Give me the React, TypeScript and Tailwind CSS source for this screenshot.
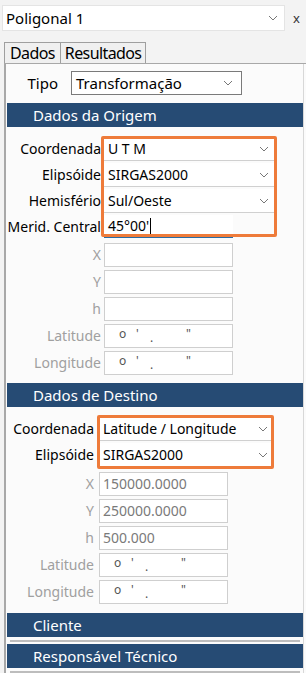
import React from 'react'

const Chevron = () => (
  <svg width="10" height="6" viewBox="0 0 10 6" className="shrink-0">
    <polyline points="1,1 5,5 9,1" fill="none" stroke="#777" strokeWidth="1" />
  </svg>
)

function Select({ value, w, className = '' }: { value: string; w: string; className?: string }) {
  return (
    <div className={`${w} h-[24px] bg-white flex items-center justify-between pl-[4px] pr-[6px] ${className}`}>
      <span className="text-black">{value}</span>
      <Chevron />
    </div>
  )
}

function Field({ value = '', dms = false }: { value?: string; dms?: boolean }) {
  return (
    <div className="w-[129px] h-[24px] bg-white border border-[#cfcfcf] flex items-center pl-[3px] text-[#7a7a7a]">
      {dms ? (
        <span className="relative w-full h-full text-[12px] text-[#555]">
          <span className="absolute left-[11px] top-[3px]">o</span>
          <span className="absolute left-[28px] top-[3px]">'</span>
          <span className="absolute left-[42px] top-[7px]">.</span>
          <span className="absolute left-[78px] top-[3px]">"</span>
        </span>
      ) : (
        value
      )}
    </div>
  )
}

function SectionBar({ title }: { title: string }) {
  return (
    <div className="h-[24px] bg-[#264b74] text-white flex items-center pl-[26px] text-[15px]">{title}</div>
  )
}

export default function App() {
  const origemFields = ['X', 'Y', 'h', 'Latitude', 'Longitude']
  const destino = [
    { l: 'X', v: '150000.0000' },
    { l: 'Y', v: '250000.0000' },
    { l: 'h', v: '500.000' },
    { l: 'Latitude', dms: true },
    { l: 'Longitude', dms: true },
  ]

  return (
    <div className="w-[306px] h-[673px] overflow-hidden bg-[#f3f3f3] text-[14px] leading-none" style={{ fontFamily: '"Noto Sans", sans-serif' }}>
      {/* top selector */}
      <div className="flex items-center pt-[5px] pl-[2px]">
        <div className="w-[283px] h-[26px] bg-white border border-[#e4e4e4] flex items-center justify-between pl-[3px] pr-[6px] text-[15px]">
          <span>Poligonal 1</span>
          <Chevron />
        </div>
        <span className="ml-[8px] text-[13px] text-[#333]">x</span>
      </div>

      {/* tabs */}
      <div className="flex pl-[4px] mt-[11px] text-[16px] tracking-[-0.6px]">
        <div className="h-[21px] px-[5px] border border-b-0 border-[#9f9f9f] bg-[#f0f0f0] flex items-center">Dados</div>
        <div className="h-[21px] px-[4px] border border-l-0 border-b-0 border-[#9f9f9f] bg-[#f0f0f0] flex items-center">Resultados</div>
      </div>

      {/* panel */}
      <div className="ml-[4px] border-l-2 border-t border-[#a8a8a8] bg-[#fbfbfb] h-[700px] pl-[1px] pr-[2px]">
        <div className="border-r border-[#d8d8d8] h-full">
          <div className="flex items-center pt-[7px] h-[31px]">
            <span className="w-[51px] text-right text-[15px]">Tipo</span>
            <div className="ml-[13px] w-[171px] h-[24px] bg-white border border-[#7a7a7a] flex items-center justify-between pl-[4px] pr-[8px] text-[15px]">
              <span>Transformação</span>
              <Chevron />
            </div>
          </div>

          <div className="mt-[8px]">
            <SectionBar title="Dados da Origem" />
          </div>

          {/* origem */}
          <div className="relative pt-[10px]">
            <div className="flex flex-col gap-[2px]">
              {[
                ['Coordenada', 'U T M'],
                ['Elipsóide', 'SIRGAS2000'],
                ['Hemisfério', 'Sul/Oeste'],
              ].map(([l, v]) => (
                <div key={l} className="flex items-center h-[24px]">
                  <span className="w-[94px] text-right">{l}</span>
                  <Select value={v} w="w-[171px]" className="ml-[3px] border-b border-[#d0d0d0]" />
                </div>
              ))}
              <div className="flex items-start h-[24px]">
                <span className="w-[94px] text-right self-center">Merid. Central</span>
                <div className="ml-[3px] w-[129px] h-[23px] bg-white flex items-center pl-[4px] border-b-2 border-[#2a6ca4]">
                  45°00'<span className="w-[1px] h-[16px] bg-black ml-[1px]" />
                </div>
              </div>
            </div>
            <div className="absolute left-[94px] top-[9px] w-[176px] h-[101px] border-[3px] border-[#ee7b3a] rounded-[2px] pointer-events-none" />

            <div className="flex flex-col gap-[3px] mt-[4px]">
              {origemFields.map((l) => (
                <div key={l} className="flex items-center h-[24px]">
                  <span className="w-[94px] text-right text-[#a0a0a0]">{l}</span>
                  <div className="ml-[3px]">
                    <Field dms={l === 'Latitude' || l === 'Longitude'} />
                  </div>
                </div>
              ))}
            </div>
          </div>

          <div className="mt-[8px]">
            <SectionBar title="Dados de Destino" />
          </div>

          {/* destino */}
          <div className="relative pt-[10px]">
            <div className="flex flex-col gap-[2px]">
              {[
                ['Coordenada', 'Latitude / Longitude'],
                ['Elipsóide', 'SIRGAS2000'],
              ].map(([l, v]) => (
                <div key={l} className="flex items-center h-[24px]">
                  <span className="w-[87px] text-right">{l}</span>
                  <Select value={v} w="w-[175px]" className="ml-[5px] border-b border-[#d0d0d0]" />
                </div>
              ))}
            </div>
            <div className="absolute left-[90px] top-[8px] w-[177px] h-[54px] border-[3px] border-[#ee7b3a] rounded-[2px] pointer-events-none" />

            <div className="flex flex-col gap-[3px] mt-[5px]">
              {destino.map((d) => (
                <div key={d.l} className="flex items-center h-[24px]">
                  <span className="w-[87px] text-right text-[#a0a0a0]">{d.l}</span>
                  <div className="ml-[5px]">
                    <Field value={d.v} dms={d.dms} />
                  </div>
                </div>
              ))}
            </div>
          </div>

          <div className="mt-[9px]">
            <SectionBar title="Cliente" />
          </div>
          <div className="h-[7px] flex items-center px-[3px]">
            <div className="h-[2px] w-full bg-[#bdbdbd]" />
          </div>
          <SectionBar title="Responsável Técnico" />
          <div className="h-[7px] flex items-center px-[3px]">
            <div className="h-[2px] w-full bg-[#bdbdbd]" />
          </div>
        </div>
      </div>
    </div>
  )
}
